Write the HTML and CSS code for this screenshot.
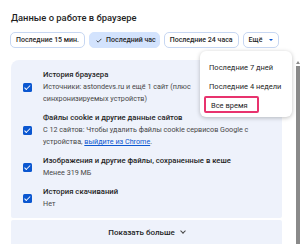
FILE: index.html
```html
<!DOCTYPE html>
<html>
    <head>
        <title>Удалить данные</title>
        <link rel="stylesheet" href="styles.css">
    </head>
    <body>
        <h1 class="heading">Данные о работе в браузере</h1>

        <!-- time range chips -->
        <div class="chips">
            <span class="chip">Последние 15 мин.</span>
            <span class="chip chip_selected">
                <svg class="chip_check" viewBox="0 0 10 8"><path d="M1 4.2 L3.6 6.8 L9 1.2" fill="none" stroke="#1f1f1f" stroke-width="1.3"/></svg>
                Последний час
            </span>
            <span class="chip">Последние 24 часа</span>
            <span class="chip">Ещё <span class="chip_arrow"></span></span>
        </div>

        <div class="scroll_area">
            <div class="list">
                <div class="panel">
                    <div class="item">
                        <span class="box"></span>
                        <div class="item_text">
                            <div class="item_title">История браузера</div>
                            <div class="item_desc">Источники: astondevs.ru и ещё 1 сайт (плюс<br>синхронизируемых устройств)</div>
                        </div>
                    </div>
                    <div class="item">
                        <span class="box"></span>
                        <div class="item_text">
                            <div class="item_title">Файлы cookie и другие данные сайтов</div>
                            <div class="item_desc">С 12 сайтов: Чтобы удалить файлы cookie сервисов Google с устройства, <span class="link">выйдите из Chrome</span>.</div>
                        </div>
                    </div>
                    <div class="item">
                        <span class="box"></span>
                        <div class="item_text">
                            <div class="item_title">Изображения и другие файлы, сохраненные в кеше</div>
                            <div class="item_desc">Менее 319 МБ</div>
                        </div>
                    </div>
                    <div class="item">
                        <span class="box"></span>
                        <div class="item_text">
                            <div class="item_title">История скачиваний</div>
                            <div class="item_desc">Нет</div>
                        </div>
                    </div>
                </div>
                <div class="more">Показать больше <span class="more_arrow"></span></div>
            </div>
            <div class="scrollbar">
                <span class="scrollbar_up"></span>
                <span class="scrollbar_thumb"></span>
            </div>
        </div>

        <!-- open menu of the "Ещё" chip -->
        <div class="menu">
            <div class="menu_item">Последние 7 дней</div>
            <div class="menu_item">Последние 4 недели</div>
            <div class="menu_item menu_item_focus">Все время</div>
        </div>
    </body>
</html>
```

FILE: styles.css
```css
body {
    margin: 0;
    width: 300px;
    height: 244px;
    overflow: hidden;
    background-color: #fff;
    font-family: Roboto, "Noto Sans", sans-serif;
    color: #1f1f1f;
    position: relative;
}
.heading {
    margin: 0;
    padding: 12px 0 0 11px;
    height: 20px;
    font-size: 9.4px;
    font-weight: 500;
    line-height: 12px;
}
.chips {
    display: flex;
    gap: 4px;
    padding-left: 10px;
    height: 16px;
}
.chip {
    display: flex;
    align-items: center;
    box-sizing: border-box;
    height: 16px;
    padding: 0 5px;
    border: 1px solid #c7d7f2;
    border-radius: 5px;
    font-size: 7px;
    font-weight: 500;
    white-space: nowrap;
}
.chip_selected {
    background-color: #d3e3fd;
    border-color: #d3e3fd;
    padding: 0 3px 0 6px;
}
.chip_check {
    width: 6px;
    height: 5px;
    margin-right: 4px;
}
.chip_arrow {
    margin-left: 7px;
    width: 0;
    height: 0;
    border-left: 2.5px solid transparent;
    border-right: 2.5px solid transparent;
    border-top: 2.5px solid #0b57d0;
}
.scroll_area {
    display: flex;
    margin-top: 12px;
    height: 184px;
}
.list {
    margin-left: 11px;
    width: 271px;
}
.panel {
    background-color: #eef2fb;
    border-radius: 8px 8px 2px 2px;
    padding: 9px 0 8px 0;
    display: flex;
    flex-direction: column;
    gap: 7px;
}
.item {
    display: flex;
    align-items: center;
}
.box {
    flex: none;
    width: 9px;
    height: 9px;
    margin: 0 11px 0 12px;
    border-radius: 1.5px;
    background-color: #0b57d0;
    position: relative;
}
.box::after {
    content: "";
    position: absolute;
    left: 3px;
    top: 1px;
    width: 2px;
    height: 4.5px;
    border: solid #fff;
    border-width: 0 1.2px 1.2px 0;
    transform: rotate(45deg);
}
.item_text {
    font-size: 7.2px;
    line-height: 12px;
    padding-right: 10px;
}
.item_title {
    font-size: 7.7px;
    font-weight: 500;
}
.item_desc {
    color: #474747;
}
.link {
    color: #0b57d0;
    text-decoration: underline;
}
.more {
    margin-top: 2px;
    height: 24px;
    background-color: #eef2fb;
    border-radius: 2px 2px 0 0;
    display: flex;
    justify-content: center;
    align-items: center;
    font-size: 8px;
    font-weight: 500;
}
.more_arrow {
    margin-left: 6px;
    margin-top: -2px;
    width: 3px;
    height: 3px;
    border: solid #474747;
    border-width: 0 1px 1px 0;
    transform: rotate(45deg);
}
.scrollbar {
    margin-left: 11px;
    width: 7px;
    display: flex;
    flex-direction: column;
    align-items: flex-end;
}
.scrollbar_up {
    width: 0;
    height: 0;
    margin: 1px 0.5px 2px 0;
    border-left: 2px solid transparent;
    border-right: 2px solid transparent;
    border-bottom: 3px solid #8a8a8a;
}
.scrollbar_thumb {
    width: 4px;
    flex: 1;
    background-color: #8a8a8a;
}
.menu {
    position: absolute;
    left: 200px;
    top: 51px;
    width: 92px;
    box-sizing: border-box;
    padding: 7px 0 4px 0;
    background-color: #fff;
    border-radius: 6px;
    box-shadow: 0 1px 4px rgba(0, 0, 0, 0.25);
    font-size: 7.5px;
}
.menu_item {
    height: 19px;
    line-height: 19px;
    padding-left: 9px;
}
.menu_item_focus {
    margin: 0 33px 0 4px;
    padding-left: 5px;
    height: 17px;
    line-height: 16px;
    border: 2px solid #e8336e;
    border-radius: 2px;
    box-sizing: border-box;
}
```
